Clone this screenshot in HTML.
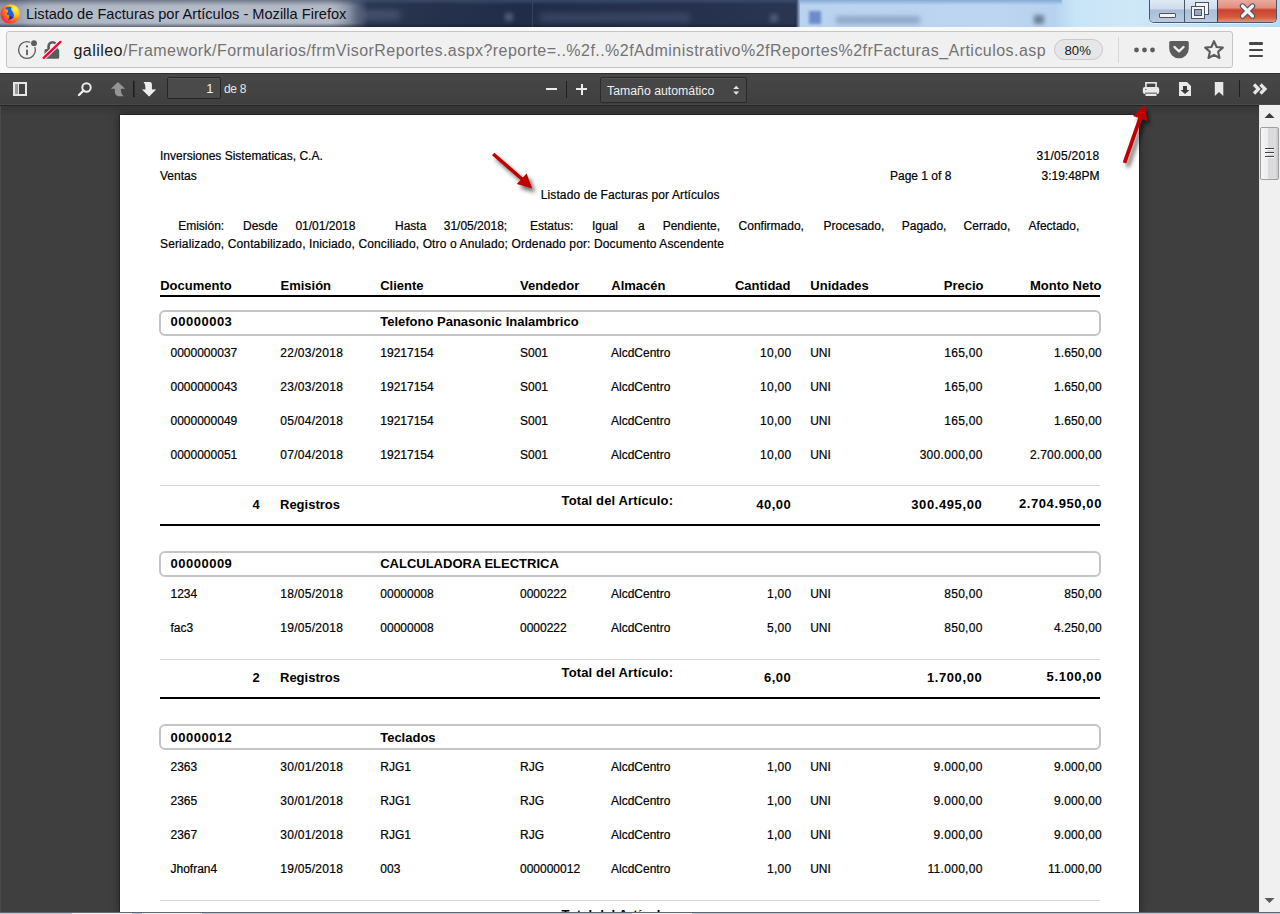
<!DOCTYPE html><html><head><meta charset="utf-8"><style>
*{margin:0;padding:0;box-sizing:border-box}
html,body{width:1280px;height:914px;overflow:hidden;background:#3f3f3f;font-family:"Liberation Sans",sans-serif}
.t{position:absolute;white-space:nowrap;line-height:1}
.pg{-webkit-text-stroke:0.2px currentColor}
.a{position:absolute}
</style></head><body>
<div class="a" style="left:0;top:0;width:1280px;height:27px;overflow:hidden;background:#b9d0ea">
<div class="a" style="left:0;top:0;width:800px;height:27px;background:linear-gradient(90deg,#8e98aa 0px,#a3acba 40px,#aab2bf 200px,#a9b0bd 330px,#7d879b 350px,#2a3550 368px,#212c48 520px,#26314d 700px,#2a3552 790px)"></div>
<div class="a" style="left:0;top:0;width:800px;height:6px;background:linear-gradient(180deg,rgba(30,40,60,.45),rgba(30,40,60,0))"></div>
<div class="a" style="left:0;top:23px;width:800px;height:4px;background:linear-gradient(180deg,rgba(20,28,45,0),rgba(20,28,45,.6))"></div>
<div class="a" style="left:796px;top:0;width:4px;height:27px;background:linear-gradient(90deg,#2a3552,#9fb8d8)"></div>
<div class="a" style="left:800px;top:0;width:480px;height:27px;background:linear-gradient(90deg,#b9d3ef 0,#bcd5f1 200px,#b6d2ee 255px,#c8e4f7 275px,#cfe8f8 330px,#b4dcf3 480px)"></div>
<div class="a" style="left:800px;top:0;width:262px;height:5px;background:linear-gradient(180deg,#86a9d6,rgba(134,169,214,0))"></div>
<div class="a" style="left:360px;top:10px;width:40px;height:10px;background:rgba(120,135,165,.35);filter:blur(3px)"></div>
<div class="a" style="left:540px;top:13px;width:150px;height:9px;background:rgba(110,125,155,.3);filter:blur(3px)"></div>
<div class="a" style="left:505px;top:13px;width:8px;height:8px;background:rgba(150,160,185,.4);filter:blur(2px)"></div>
<div class="a" style="left:770px;top:14px;width:8px;height:8px;background:rgba(150,160,185,.35);filter:blur(2px)"></div>
<div class="a" style="left:350px;top:0;width:446px;height:5px;background:linear-gradient(180deg,rgba(80,100,140,.5),rgba(80,100,140,0))"></div>
<div class="a" style="left:532px;top:2px;width:1px;height:25px;background:rgba(90,105,140,.35)"></div>
<div class="a" style="left:809px;top:11px;width:12px;height:13px;background:rgba(50,80,170,.55);filter:blur(1.5px)"></div>
<div class="a" style="left:836px;top:16px;width:84px;height:8px;background:rgba(70,90,130,.35);filter:blur(2.5px)"></div>
<div class="a" style="left:1034px;top:15px;width:10px;height:9px;background:rgba(50,60,80,.55);filter:blur(2px)"></div>
<div class="a" style="left:22px;top:4px;width:326px;height:20px;border-radius:10px;background:rgba(200,206,216,.4);filter:blur(4px)"></div>
</div>
<svg class="a" style="left:0;top:3px" width="21" height="21" viewBox="0 0 21 21">
<defs><radialGradient id="ff" cx="75%" cy="25%" r="95%"><stop offset="0" stop-color="#fff44f"/><stop offset=".35" stop-color="#ffbd1f"/><stop offset=".6" stop-color="#ff6d1f"/><stop offset=".85" stop-color="#ff2a3a"/><stop offset="1" stop-color="#d4157a"/></radialGradient></defs>
<circle cx="10.2" cy="11" r="9.8" fill="url(#ff)"/>
<path d="M5 5 Q8 3 11.5 4 Q10.5 7 13 9 Q14.5 11.5 13.5 14.5 Q11 17 8 16.5 Q10 14.5 9.5 12.5 Q7 12.5 6.5 10.5 Q8.5 9 8 7 Q6 6.5 5 5Z" fill="#1565e8"/>
<path d="M9.5 12.5 Q11.5 13.5 13.5 14.5 Q11 17 8 16.5 Q10 14.5 9.5 12.5Z" fill="#1c2bb0"/>
</svg>
<div class="t" style="left:26.00px;top:6.64px;font-size:14.6px;color:#0b0f1a;">Listado de Facturas por Artículos - Mozilla Firefox</div>
<div class="a" style="left:1149px;top:-2px;width:128px;height:25px;border:1px solid #4b5569;border-top:none;border-radius:0 0 5px 5px;overflow:hidden;box-shadow:0 1px 0 rgba(255,255,255,.5)">
<div class="a" style="left:0;top:0;width:35px;height:24px;background:linear-gradient(180deg,#e3ecf6 0,#cfdcec 45%,#a9bdd6 50%,#b8cbe0 100%);border-right:1px solid #4b5569"></div>
<div class="a" style="left:35px;top:0;width:33px;height:24px;background:linear-gradient(180deg,#e3ecf6 0,#cfdcec 45%,#a9bdd6 50%,#b8cbe0 100%);border-right:1px solid #5a3030"></div>
<div class="a" style="left:68px;top:0;width:60px;height:24px;background:linear-gradient(180deg,#eeb2a6 0,#e08f80 40%,#c8432d 50%,#d65a43 80%,#e49282 100%)"></div>
</div>
<div class="a" style="left:1159px;top:13px;width:17px;height:5px;background:#f4f4f4;border:1px solid #4a5366;border-radius:1px"></div>
<div class="a" style="left:1195px;top:2px;width:14px;height:13px;background:#f4f4f4;border:1px solid #4a5366"></div>
<div class="a" style="left:1191px;top:6px;width:14px;height:13px;background:#f4f4f4;border:1px solid #4a5366"></div>
<div class="a" style="left:1194px;top:9px;width:8px;height:7px;background:#9aa8bc;border:1px solid #4a5366"></div>
<svg class="a" style="left:1239px;top:3px" width="17" height="16" viewBox="0 0 17 16"><path d="M3.5 3 L13.5 13 M13.5 3 L3.5 13" stroke="#4a5366" stroke-width="5.4" fill="none" stroke-linecap="round" stroke-linejoin="round"/><path d="M3.5 3 L13.5 13 M13.5 3 L3.5 13" stroke="#f2f2f2" stroke-width="3.2" fill="none" stroke-linecap="round" stroke-linejoin="round"/></svg>
<div class="a" style="left:0;top:27px;width:1280px;height:46px;background:#f9f9fa"></div>
<div class="a" style="left:6px;top:31px;width:1227px;height:37px;background:#f0f0f0;border:1px solid #c5c5c5;border-radius:3px"></div>
<svg class="a" style="left:17px;top:37.6px" width="24" height="24" viewBox="0 0 24 24"><circle cx="10" cy="12" r="8.4" fill="none" stroke="#5b5b5b" stroke-width="1.3"/><rect x="9.1" y="11.5" width="1.8" height="5.7" rx=".6" fill="#5b5b5b"/><circle cx="10" cy="8.4" r="1.1" fill="#5b5b5b"/><circle cx="17" cy="5.2" r="3.8" fill="#f0f0f0"/><circle cx="17" cy="5.2" r="2.9" fill="#5b5b5b"/></svg>
<svg class="a" style="left:42px;top:40px" width="22" height="20" viewBox="0 0 22 20"><path d="M6.6 9.5 V6.2 A3.9 3.9 0 0 1 14.4 6.2 V9.5" stroke="#5b5b5b" stroke-width="2.6" fill="none"/><rect x="2.5" y="8.9" width="14.7" height="9.8" rx="1.5" fill="#5b5b5b"/><path d="M1.75 17.8 L18.4 1.9" stroke="#f0f0f0" stroke-width="4.6" stroke-linecap="round"/><path d="M1.75 17.8 L18.4 1.9" stroke="#ff0039" stroke-width="2.4" stroke-linecap="round"/></svg>
<div class="t" style="left:73.50px;top:43.06px;font-size:16px;color:#737373;letter-spacing:0.46px;"><span style="color:#1a1a1a">galileo</span>/Framework/Formularios/frmVisorReportes.aspx?reporte=..%2f..%2fAdministrativo%2fReportes%2frFacturas_Articulos.asp</div>
<div class="a" style="left:1054px;top:39px;width:49px;height:21px;border:1px solid #c9c9c9;border-radius:11px;background:#e6e6e6"></div>
<div class="t" style="left:1064.50px;top:44.13px;font-size:13.2px;color:#1a1a1a;">80%</div>
<div class="a" style="left:1118px;top:37px;width:1px;height:26px;background:#d8d8d8"></div>
<svg class="a" style="left:1132.8px;top:43.8px" width="24" height="12" viewBox="0 0 24 12"><circle cx="3.5" cy="6" r="2.4" fill="#5c5c5c"/><circle cx="11.5" cy="6" r="2.4" fill="#5c5c5c"/><circle cx="19.5" cy="6" r="2.4" fill="#5c5c5c"/></svg>
<svg class="a" style="left:1168px;top:40px" width="22" height="20" viewBox="0 0 22 20"><path d="M1.2 2.5 Q1.2 1 2.7 1 H19.3 Q20.8 1 20.8 2.5 V8.5 A9.8 9.8 0 0 1 1.2 8.5Z" fill="#5c5c5c"/><path d="M6.5 7 L11 11.3 L15.5 7" stroke="#f0f0f0" stroke-width="2.4" fill="none" stroke-linecap="round" stroke-linejoin="round"/></svg>
<svg class="a" style="left:1203px;top:39px" width="22" height="22" viewBox="0 0 22 22"><path d="M11 2.2 L13.6 8 L19.8 8.6 L15.1 12.8 L16.5 19 L11 15.8 L5.5 19 L6.9 12.8 L2.2 8.6 L8.4 8 Z" fill="none" stroke="#5c5c5c" stroke-width="2.1" stroke-linejoin="round"/></svg>
<div class="a" style="left:1248.7px;top:42.4px;width:14.6px;height:2.4px;background:#484848;border-radius:1.2px"></div>
<div class="a" style="left:1248.7px;top:48.6px;width:14.6px;height:2.4px;background:#484848;border-radius:1.2px"></div>
<div class="a" style="left:1248.7px;top:55.1px;width:14.6px;height:2.4px;background:#484848;border-radius:1.2px"></div>
<div class="a" style="left:0;top:73px;width:1280px;height:31px;background:linear-gradient(180deg,#474747,#444444 50%,#3f3f3f)"></div>
<div class="a" style="left:0;top:72.5px;width:1280px;height:1px;background:#2e2e2e"></div>
<div class="a" style="left:0;top:104px;width:1280px;height:1px;background:#4a4a4a"></div>
<div class="a" style="left:0;top:105px;width:1280px;height:1px;background:#262626"></div>
<div class="a" style="left:0;top:106px;width:1259px;height:9px;background:linear-gradient(180deg,rgba(0,0,0,.14),rgba(0,0,0,.02))"></div>
<div class="a" style="left:0;top:106px;width:1px;height:806px;background:#4a4a4a"></div>
<div class="a" style="left:13px;top:82px;width:14px;height:14px;border:2px solid #e6e6e6"></div><div class="a" style="left:15px;top:84px;width:3px;height:10px;background:#9a9a9a"></div><div class="a" style="left:18px;top:84px;width:1px;height:10px;background:#e6e6e6"></div>
<svg class="a" style="left:77px;top:81px" width="16" height="16" viewBox="0 0 16 16"><circle cx="9.5" cy="6.5" r="4.2" fill="none" stroke="#ececec" stroke-width="2"/><path d="M6.5 9.5 L2 14" stroke="#ececec" stroke-width="2.4" stroke-linecap="round"/></svg>
<svg class="a" style="left:105px;top:76px" width="60" height="26" viewBox="0 0 60 26">
<defs><filter id="ds" x="-30%" y="-30%" width="160%" height="160%"><feDropShadow dx="0" dy="0.3" stdDeviation="0.6" flood-color="#000" flood-opacity=".7"/></filter></defs>
<path d="M5.9 12.7 L12.9 5.9 L20.2 12.7 H15.9 Q15.6 18 18.8 20.2 H13 Q9.8 19 9.8 15.5 V12.7Z" fill="#959595"/>
<rect x="28" y="4.7" width="1.6" height="16.5" fill="#1e1e1e"/>
<path d="M38.6 6.1 H45 Q46.9 6.3 46.9 8.5 V13.4 H51.1 L44.1 20.4 L37 13.4 H40.5 Q40.5 8 38.6 6.1Z" fill="#ededed" filter="url(#ds)"/>
</svg>
<div class="a" style="left:167px;top:77px;width:54px;height:22px;background:#4a4a4a;border:1px solid #262626;border-radius:2px;box-shadow:inset 0 1px 0 rgba(255,255,255,.06)"></div>
<div class="t" style="right:1066.50px;top:82.00px;font-size:13px;color:#f0f0f0;">1</div>
<div class="t" style="left:224.00px;top:82.84px;font-size:12px;color:#e6e6e6;letter-spacing:-0.3px;">de 8</div>
<div class="a" style="left:546px;top:88px;width:11px;height:2px;background:#ececec"></div>
<div class="a" style="left:566px;top:81px;width:1px;height:17px;background:#1f1f1f"></div>
<div class="a" style="left:576px;top:88px;width:11px;height:2px;background:#ececec"></div>
<div class="a" style="left:580.5px;top:83.5px;width:2px;height:11px;background:#ececec"></div>
<div class="a" style="left:600px;top:77px;width:147px;height:26px;background:#464646;border:1px solid #2a2a2a;border-radius:2px;box-shadow:inset 0 1px 0 rgba(255,255,255,.06)"></div>
<div class="t" style="left:607.00px;top:84.59px;font-size:12.3px;color:#efefef;">Tamaño automático</div>
<svg class="a" style="left:731.5px;top:84px" width="9" height="12" viewBox="0 0 9 12"><path d="M1.2 5 L4.2 1.8 L7.2 5Z M1.2 7.5 L4.2 10.7 L7.2 7.5Z" fill="#e6e6e6"/></svg>
<svg class="a" style="left:1142px;top:81px" width="18" height="16" viewBox="0 0 18 16"><rect x="3.9" y="1.8" width="10.2" height="5.5" fill="none" stroke="#e8e8e8" stroke-width="1.6"/><rect x="0.8" y="6" width="16.4" height="7" rx="2" fill="#e8e8e8"/><rect x="3" y="11.6" width="12" height="1.2" fill="#6a6a6a"/><rect x="3.5" y="13" width="11" height="2" fill="#e8e8e8"/><rect x="3" y="8" width="1.5" height="1" fill="#777"/></svg>
<svg class="a" style="left:1178px;top:81px" width="14" height="16" viewBox="0 0 14 16"><path d="M1 1 H9 L13 5 V15 H1Z" fill="#e8e8e8"/><path d="M5 5 H9 V9 H11.5 L7 13 L2.5 9 H5Z" fill="#393939"/></svg>
<svg class="a" style="left:1214px;top:81px" width="10" height="16" viewBox="0 0 10 16"><path d="M0.8 1 H9.3 V15 L5 11 L0.8 15Z" fill="#e8e8e8"/></svg>
<div class="a" style="left:1239px;top:80px;width:1px;height:17px;background:#1f1f1f"></div>
<svg class="a" style="left:1252px;top:83px" width="16" height="12" viewBox="0 0 16 12"><path d="M2 1.5 L6.5 6 L2 10.5 M8.5 1.5 L13 6 L8.5 10.5" stroke="#e8e8e8" stroke-width="3.2" fill="none" stroke-linejoin="miter"/></svg>
<div class="a" style="left:120px;top:114.5px;width:1019px;height:800px;background:#fff;box-shadow:0 0 0 1px rgba(0,0,0,.25),0 0 9px 1px rgba(0,0,0,.38)"></div>
<div class="t pg" style="left:160.00px;top:149.84px;font-size:12px;color:#000;">Inversiones Sistematicas, C.A.</div>
<div class="t pg" style="left:160.00px;top:169.84px;font-size:12px;color:#000;">Ventas</div>
<div class="t pg" style="left:540.80px;top:189.34px;font-size:12px;color:#000;letter-spacing:0.1px;">Listado de Facturas por Artículos</div>
<div class="t pg" style="right:180.50px;top:149.84px;font-size:12px;color:#000;letter-spacing:0.3px;">31/05/2018</div>
<div class="t pg" style="left:890.00px;top:169.84px;font-size:12px;color:#000;">Page 1 of 8</div>
<div class="t pg" style="right:180.50px;top:169.84px;font-size:12px;color:#000;">3:19:48PM</div>
<div class="t pg" style="left:178.20px;top:220.44px;font-size:12px;color:#000;">Emisión:</div>
<div class="t pg" style="left:243.00px;top:220.44px;font-size:12px;color:#000;">Desde</div>
<div class="t pg" style="left:295.40px;top:220.44px;font-size:12px;color:#000;">01/01/2018</div>
<div class="t pg" style="left:395.00px;top:220.44px;font-size:12px;color:#000;">Hasta</div>
<div class="t pg" style="left:443.75px;top:220.44px;font-size:12px;color:#000;">31/05/2018;</div>
<div class="t pg" style="left:530.00px;top:220.44px;font-size:12px;color:#000;">Estatus:</div>
<div class="t pg" style="left:592.00px;top:220.44px;font-size:12px;color:#000;">Igual</div>
<div class="t pg" style="left:638.00px;top:220.44px;font-size:12px;color:#000;">a</div>
<div class="t pg" style="left:662.70px;top:220.44px;font-size:12px;color:#000;">Pendiente,</div>
<div class="t pg" style="left:738.60px;top:220.44px;font-size:12px;color:#000;">Confirmado,</div>
<div class="t pg" style="left:823.60px;top:220.44px;font-size:12px;color:#000;">Procesado,</div>
<div class="t pg" style="left:901.75px;top:220.44px;font-size:12px;color:#000;">Pagado,</div>
<div class="t pg" style="left:963.60px;top:220.44px;font-size:12px;color:#000;">Cerrado,</div>
<div class="t pg" style="left:1028.60px;top:220.44px;font-size:12px;color:#000;">Afectado,</div>
<div class="t pg" style="left:160.00px;top:237.84px;font-size:12px;color:#000;letter-spacing:0.13px;">Serializado, Contabilizado, Iniciado, Conciliado, Otro o Anulado; Ordenado por: Documento Ascendente</div>
<div class="t" style="left:160.20px;top:279.00px;font-size:13px;font-weight:bold;color:#000;">Documento</div>
<div class="t" style="left:280.50px;top:279.00px;font-size:13px;font-weight:bold;color:#000;">Emisión</div>
<div class="t" style="left:380.20px;top:279.00px;font-size:13px;font-weight:bold;color:#000;">Cliente</div>
<div class="t" style="left:520.00px;top:279.00px;font-size:13px;font-weight:bold;color:#000;">Vendedor</div>
<div class="t" style="left:611.30px;top:279.00px;font-size:13px;font-weight:bold;color:#000;">Almacén</div>
<div class="t" style="right:489.50px;top:279.00px;font-size:13px;font-weight:bold;color:#000;">Cantidad</div>
<div class="t" style="left:810.30px;top:279.00px;font-size:13px;font-weight:bold;color:#000;">Unidades</div>
<div class="t" style="right:296.50px;top:279.00px;font-size:13px;font-weight:bold;color:#000;">Precio</div>
<div class="t" style="right:178.50px;top:279.00px;font-size:13px;font-weight:bold;color:#000;">Monto Neto</div>
<div class="a" style="left:160px;top:295px;width:940px;height:2px;background:#000"></div>
<div class="a" style="left:159px;top:310px;width:941.5px;height:26px;border:2px solid #c4c4c4;border-radius:6px"></div>
<div class="t" style="left:170.50px;top:315.00px;font-size:13px;font-weight:bold;color:#000;letter-spacing:0.5px;">00000003</div>
<div class="t" style="left:380.20px;top:315.00px;font-size:13px;font-weight:bold;color:#000;">Telefono Panasonic Inalambrico</div>
<div class="t pg" style="left:170.50px;top:347.44px;font-size:12px;color:#000;">0000000037</div>
<div class="t pg" style="left:280.20px;top:347.44px;font-size:12px;color:#000;letter-spacing:0.3px;">22/03/2018</div>
<div class="t pg" style="left:380.30px;top:347.44px;font-size:12px;color:#000;">19217154</div>
<div class="t pg" style="left:520.00px;top:347.44px;font-size:12px;color:#000;">S001</div>
<div class="t pg" style="left:611.00px;top:347.44px;font-size:12px;color:#000;">AlcdCentro</div>
<div class="t pg" style="right:488.50px;top:347.44px;font-size:12px;color:#000;letter-spacing:0.3px;">10,00</div>
<div class="t pg" style="left:810.20px;top:347.44px;font-size:12px;color:#000;">UNI</div>
<div class="t pg" style="right:297.30px;top:347.44px;font-size:12px;color:#000;letter-spacing:0.3px;">165,00</div>
<div class="t pg" style="right:178.20px;top:347.44px;font-size:12px;color:#000;letter-spacing:0.15px;">1.650,00</div>
<div class="t pg" style="left:170.50px;top:381.14px;font-size:12px;color:#000;">0000000043</div>
<div class="t pg" style="left:280.20px;top:381.14px;font-size:12px;color:#000;letter-spacing:0.3px;">23/03/2018</div>
<div class="t pg" style="left:380.30px;top:381.14px;font-size:12px;color:#000;">19217154</div>
<div class="t pg" style="left:520.00px;top:381.14px;font-size:12px;color:#000;">S001</div>
<div class="t pg" style="left:611.00px;top:381.14px;font-size:12px;color:#000;">AlcdCentro</div>
<div class="t pg" style="right:488.50px;top:381.14px;font-size:12px;color:#000;letter-spacing:0.3px;">10,00</div>
<div class="t pg" style="left:810.20px;top:381.14px;font-size:12px;color:#000;">UNI</div>
<div class="t pg" style="right:297.30px;top:381.14px;font-size:12px;color:#000;letter-spacing:0.3px;">165,00</div>
<div class="t pg" style="right:178.20px;top:381.14px;font-size:12px;color:#000;letter-spacing:0.15px;">1.650,00</div>
<div class="t pg" style="left:170.50px;top:414.74px;font-size:12px;color:#000;">0000000049</div>
<div class="t pg" style="left:280.20px;top:414.74px;font-size:12px;color:#000;letter-spacing:0.3px;">05/04/2018</div>
<div class="t pg" style="left:380.30px;top:414.74px;font-size:12px;color:#000;">19217154</div>
<div class="t pg" style="left:520.00px;top:414.74px;font-size:12px;color:#000;">S001</div>
<div class="t pg" style="left:611.00px;top:414.74px;font-size:12px;color:#000;">AlcdCentro</div>
<div class="t pg" style="right:488.50px;top:414.74px;font-size:12px;color:#000;letter-spacing:0.3px;">10,00</div>
<div class="t pg" style="left:810.20px;top:414.74px;font-size:12px;color:#000;">UNI</div>
<div class="t pg" style="right:297.30px;top:414.74px;font-size:12px;color:#000;letter-spacing:0.3px;">165,00</div>
<div class="t pg" style="right:178.20px;top:414.74px;font-size:12px;color:#000;letter-spacing:0.15px;">1.650,00</div>
<div class="t pg" style="left:170.50px;top:448.64px;font-size:12px;color:#000;">0000000051</div>
<div class="t pg" style="left:280.20px;top:448.64px;font-size:12px;color:#000;letter-spacing:0.3px;">07/04/2018</div>
<div class="t pg" style="left:380.30px;top:448.64px;font-size:12px;color:#000;">19217154</div>
<div class="t pg" style="left:520.00px;top:448.64px;font-size:12px;color:#000;">S001</div>
<div class="t pg" style="left:611.00px;top:448.64px;font-size:12px;color:#000;">AlcdCentro</div>
<div class="t pg" style="right:488.50px;top:448.64px;font-size:12px;color:#000;letter-spacing:0.3px;">10,00</div>
<div class="t pg" style="left:810.20px;top:448.64px;font-size:12px;color:#000;">UNI</div>
<div class="t pg" style="right:297.30px;top:448.64px;font-size:12px;color:#000;letter-spacing:0.3px;">300.000,00</div>
<div class="t pg" style="right:178.20px;top:448.64px;font-size:12px;color:#000;letter-spacing:0.15px;">2.700.000,00</div>
<div class="a" style="left:160px;top:485px;width:940px;height:1px;background:#d4d4d4"></div>
<div class="t" style="right:1020.20px;top:498.40px;font-size:13px;font-weight:bold;color:#000;">4</div>
<div class="t" style="left:280.00px;top:498.40px;font-size:13px;font-weight:bold;color:#000;">Registros</div>
<div class="t" style="left:561.60px;top:493.70px;font-size:13px;font-weight:bold;color:#000;letter-spacing:0.13px;">Total del Artículo:</div>
<div class="t" style="right:488.70px;top:498.40px;font-size:13px;font-weight:bold;color:#000;letter-spacing:0.5px;">40,00</div>
<div class="t" style="right:297.70px;top:497.90px;font-size:13px;font-weight:bold;color:#000;letter-spacing:0.6px;">300.495,00</div>
<div class="t" style="right:178.00px;top:496.90px;font-size:13px;font-weight:bold;color:#000;letter-spacing:0.6px;">2.704.950,00</div>
<div class="a" style="left:160px;top:523.5px;width:940px;height:2px;background:#000"></div>
<div class="a" style="left:159px;top:551px;width:941.5px;height:26px;border:2px solid #c4c4c4;border-radius:6px"></div>
<div class="t" style="left:170.50px;top:557.10px;font-size:13px;font-weight:bold;color:#000;letter-spacing:0.5px;">00000009</div>
<div class="t" style="left:380.20px;top:557.10px;font-size:13px;font-weight:bold;color:#000;">CALCULADORA ELECTRICA</div>
<div class="t pg" style="left:170.50px;top:587.84px;font-size:12px;color:#000;">1234</div>
<div class="t pg" style="left:280.20px;top:587.84px;font-size:12px;color:#000;letter-spacing:0.3px;">18/05/2018</div>
<div class="t pg" style="left:380.30px;top:587.84px;font-size:12px;color:#000;">00000008</div>
<div class="t pg" style="left:520.00px;top:587.84px;font-size:12px;color:#000;">0000222</div>
<div class="t pg" style="left:611.00px;top:587.84px;font-size:12px;color:#000;">AlcdCentro</div>
<div class="t pg" style="right:488.50px;top:587.84px;font-size:12px;color:#000;letter-spacing:0.3px;">1,00</div>
<div class="t pg" style="left:810.20px;top:587.84px;font-size:12px;color:#000;">UNI</div>
<div class="t pg" style="right:297.30px;top:587.84px;font-size:12px;color:#000;letter-spacing:0.3px;">850,00</div>
<div class="t pg" style="right:178.20px;top:587.84px;font-size:12px;color:#000;letter-spacing:0.15px;">850,00</div>
<div class="t pg" style="left:170.50px;top:621.84px;font-size:12px;color:#000;">fac3</div>
<div class="t pg" style="left:280.20px;top:621.84px;font-size:12px;color:#000;letter-spacing:0.3px;">19/05/2018</div>
<div class="t pg" style="left:380.30px;top:621.84px;font-size:12px;color:#000;">00000008</div>
<div class="t pg" style="left:520.00px;top:621.84px;font-size:12px;color:#000;">0000222</div>
<div class="t pg" style="left:611.00px;top:621.84px;font-size:12px;color:#000;">AlcdCentro</div>
<div class="t pg" style="right:488.50px;top:621.84px;font-size:12px;color:#000;letter-spacing:0.3px;">5,00</div>
<div class="t pg" style="left:810.20px;top:621.84px;font-size:12px;color:#000;">UNI</div>
<div class="t pg" style="right:297.30px;top:621.84px;font-size:12px;color:#000;letter-spacing:0.3px;">850,00</div>
<div class="t pg" style="right:178.20px;top:621.84px;font-size:12px;color:#000;letter-spacing:0.15px;">4.250,00</div>
<div class="a" style="left:160px;top:658.5px;width:940px;height:1px;background:#d4d4d4"></div>
<div class="t" style="right:1020.20px;top:671.00px;font-size:13px;font-weight:bold;color:#000;">2</div>
<div class="t" style="left:280.00px;top:671.00px;font-size:13px;font-weight:bold;color:#000;">Registros</div>
<div class="t" style="left:561.60px;top:666.30px;font-size:13px;font-weight:bold;color:#000;letter-spacing:0.13px;">Total del Artículo:</div>
<div class="t" style="right:488.70px;top:671.00px;font-size:13px;font-weight:bold;color:#000;letter-spacing:0.5px;">6,00</div>
<div class="t" style="right:297.70px;top:670.50px;font-size:13px;font-weight:bold;color:#000;letter-spacing:0.6px;">1.700,00</div>
<div class="t" style="right:178.00px;top:669.50px;font-size:13px;font-weight:bold;color:#000;letter-spacing:0.6px;">5.100,00</div>
<div class="a" style="left:160px;top:697px;width:940px;height:2px;background:#000"></div>
<div class="a" style="left:159px;top:724px;width:941.5px;height:26px;border:2px solid #c4c4c4;border-radius:6px"></div>
<div class="t" style="left:170.50px;top:730.50px;font-size:13px;font-weight:bold;color:#000;letter-spacing:0.5px;">00000012</div>
<div class="t" style="left:380.20px;top:730.50px;font-size:13px;font-weight:bold;color:#000;">Teclados</div>
<div class="t pg" style="left:170.50px;top:760.64px;font-size:12px;color:#000;">2363</div>
<div class="t pg" style="left:280.20px;top:760.64px;font-size:12px;color:#000;letter-spacing:0.3px;">30/01/2018</div>
<div class="t pg" style="left:380.30px;top:760.64px;font-size:12px;color:#000;">RJG1</div>
<div class="t pg" style="left:520.00px;top:760.64px;font-size:12px;color:#000;">RJG</div>
<div class="t pg" style="left:611.00px;top:760.64px;font-size:12px;color:#000;">AlcdCentro</div>
<div class="t pg" style="right:488.50px;top:760.64px;font-size:12px;color:#000;letter-spacing:0.3px;">1,00</div>
<div class="t pg" style="left:810.20px;top:760.64px;font-size:12px;color:#000;">UNI</div>
<div class="t pg" style="right:297.30px;top:760.64px;font-size:12px;color:#000;letter-spacing:0.3px;">9.000,00</div>
<div class="t pg" style="right:178.20px;top:760.64px;font-size:12px;color:#000;letter-spacing:0.15px;">9.000,00</div>
<div class="t pg" style="left:170.50px;top:794.64px;font-size:12px;color:#000;">2365</div>
<div class="t pg" style="left:280.20px;top:794.64px;font-size:12px;color:#000;letter-spacing:0.3px;">30/01/2018</div>
<div class="t pg" style="left:380.30px;top:794.64px;font-size:12px;color:#000;">RJG1</div>
<div class="t pg" style="left:520.00px;top:794.64px;font-size:12px;color:#000;">RJG</div>
<div class="t pg" style="left:611.00px;top:794.64px;font-size:12px;color:#000;">AlcdCentro</div>
<div class="t pg" style="right:488.50px;top:794.64px;font-size:12px;color:#000;letter-spacing:0.3px;">1,00</div>
<div class="t pg" style="left:810.20px;top:794.64px;font-size:12px;color:#000;">UNI</div>
<div class="t pg" style="right:297.30px;top:794.64px;font-size:12px;color:#000;letter-spacing:0.3px;">9.000,00</div>
<div class="t pg" style="right:178.20px;top:794.64px;font-size:12px;color:#000;letter-spacing:0.15px;">9.000,00</div>
<div class="t pg" style="left:170.50px;top:828.54px;font-size:12px;color:#000;">2367</div>
<div class="t pg" style="left:280.20px;top:828.54px;font-size:12px;color:#000;letter-spacing:0.3px;">30/01/2018</div>
<div class="t pg" style="left:380.30px;top:828.54px;font-size:12px;color:#000;">RJG1</div>
<div class="t pg" style="left:520.00px;top:828.54px;font-size:12px;color:#000;">RJG</div>
<div class="t pg" style="left:611.00px;top:828.54px;font-size:12px;color:#000;">AlcdCentro</div>
<div class="t pg" style="right:488.50px;top:828.54px;font-size:12px;color:#000;letter-spacing:0.3px;">1,00</div>
<div class="t pg" style="left:810.20px;top:828.54px;font-size:12px;color:#000;">UNI</div>
<div class="t pg" style="right:297.30px;top:828.54px;font-size:12px;color:#000;letter-spacing:0.3px;">9.000,00</div>
<div class="t pg" style="right:178.20px;top:828.54px;font-size:12px;color:#000;letter-spacing:0.15px;">9.000,00</div>
<div class="t pg" style="left:170.50px;top:862.54px;font-size:12px;color:#000;">Jhofran4</div>
<div class="t pg" style="left:280.20px;top:862.54px;font-size:12px;color:#000;letter-spacing:0.3px;">19/05/2018</div>
<div class="t pg" style="left:380.30px;top:862.54px;font-size:12px;color:#000;">003</div>
<div class="t pg" style="left:520.00px;top:862.54px;font-size:12px;color:#000;">000000012</div>
<div class="t pg" style="left:611.00px;top:862.54px;font-size:12px;color:#000;">AlcdCentro</div>
<div class="t pg" style="right:488.50px;top:862.54px;font-size:12px;color:#000;letter-spacing:0.3px;">1,00</div>
<div class="t pg" style="left:810.20px;top:862.54px;font-size:12px;color:#000;">UNI</div>
<div class="t pg" style="right:297.30px;top:862.54px;font-size:12px;color:#000;letter-spacing:0.3px;">11.000,00</div>
<div class="t pg" style="right:178.20px;top:862.54px;font-size:12px;color:#000;letter-spacing:0.15px;">11.000,00</div>
<div class="a" style="left:160px;top:900px;width:940px;height:1px;background:#d4d4d4"></div>
<div class="t" style="right:1020.20px;top:913.00px;font-size:13px;font-weight:bold;color:#000;">4</div>
<div class="t" style="left:280.00px;top:913.00px;font-size:13px;font-weight:bold;color:#000;">Registros</div>
<div class="t" style="left:561.60px;top:907.60px;font-size:13px;font-weight:bold;color:#000;letter-spacing:0.13px;">Total del Artículo:</div>
<div class="t" style="right:488.70px;top:913.00px;font-size:13px;font-weight:bold;color:#000;letter-spacing:0.5px;">40,00</div>
<div class="t" style="right:297.70px;top:912.50px;font-size:13px;font-weight:bold;color:#000;letter-spacing:0.6px;"></div>
<div class="t" style="right:178.00px;top:911.50px;font-size:13px;font-weight:bold;color:#000;letter-spacing:0.6px;"></div>
<svg class="a" style="left:0;top:0;overflow:visible" width="1280" height="914">
<defs><filter id="sh" x="-50%" y="-50%" width="200%" height="200%"><feGaussianBlur in="SourceAlpha" stdDeviation="2.2"/><feOffset dx="3" dy="3.5"/><feComponentTransfer><feFuncA type="linear" slope="0.6"/></feComponentTransfer><feMerge><feMergeNode/><feMergeNode in="SourceGraphic"/></feMerge></filter></defs>
<g filter="url(#sh)" fill="#c00000">
<path d="M492.05 155.32 L494.35 152.68 L522.8 177.43 L526.6 173.4 L532.3 188.5 L516.7 184.1 L520.5 180.07Z"/>
<path d="M1122.71 162.17 L1138.26 117.72 L1133 116 L1144.5 105 L1147.1 120.7 L1141.84 118.98 L1126.29 163.43Z"/>
</g></svg>
<div class="a" style="left:1259px;top:105px;width:21px;height:807px;background:#f0f0f0;border-left:1px solid #e6e6e6"></div>
<svg class="a" style="left:1264px;top:112px" width="11" height="7" viewBox="0 0 11 7"><path d="M0.5 6 L5.5 1 L10.5 6Z" fill="#3c3c3c"/></svg>
<svg class="a" style="left:1264px;top:897px" width="11" height="7" viewBox="0 0 11 7"><path d="M0.5 1 L5.5 6 L10.5 1Z" fill="#5a5a5a"/></svg>
<div class="a" style="left:1260px;top:127px;width:19px;height:53px;border:1px solid #a0a0a0;border-radius:2px;background:linear-gradient(90deg,#f6f6f6 0,#ececec 40%,#d9d9db 45%,#dcdcde 85%,#c4c4c6 100%)"></div>
<div class="a" style="left:1265px;top:148px;width:9px;height:1px;background:#404040"></div><div class="a" style="left:1265px;top:149px;width:9px;height:1px;background:#fafafa"></div>
<div class="a" style="left:1265px;top:152px;width:9px;height:1px;background:#404040"></div><div class="a" style="left:1265px;top:153px;width:9px;height:1px;background:#fafafa"></div>
<div class="a" style="left:1265px;top:156px;width:9px;height:1px;background:#404040"></div><div class="a" style="left:1265px;top:157px;width:9px;height:1px;background:#fafafa"></div>
<div class="a" style="left:0;top:912px;width:1280px;height:1px;background:#5d6572"></div>
<div class="a" style="left:0;top:913px;width:1280px;height:1px;background:#b9c0ca"></div>
<div class="a" style="left:72px;top:913px;width:60px;height:1px;background:#f4f4f4"></div>
<div class="a" style="left:142px;top:913px;width:60px;height:1px;background:#f4f4f4"></div>
<div class="a" style="left:632px;top:913px;width:60px;height:1px;background:#f4f4f4"></div>
<!--PAGE-->
</body></html>
